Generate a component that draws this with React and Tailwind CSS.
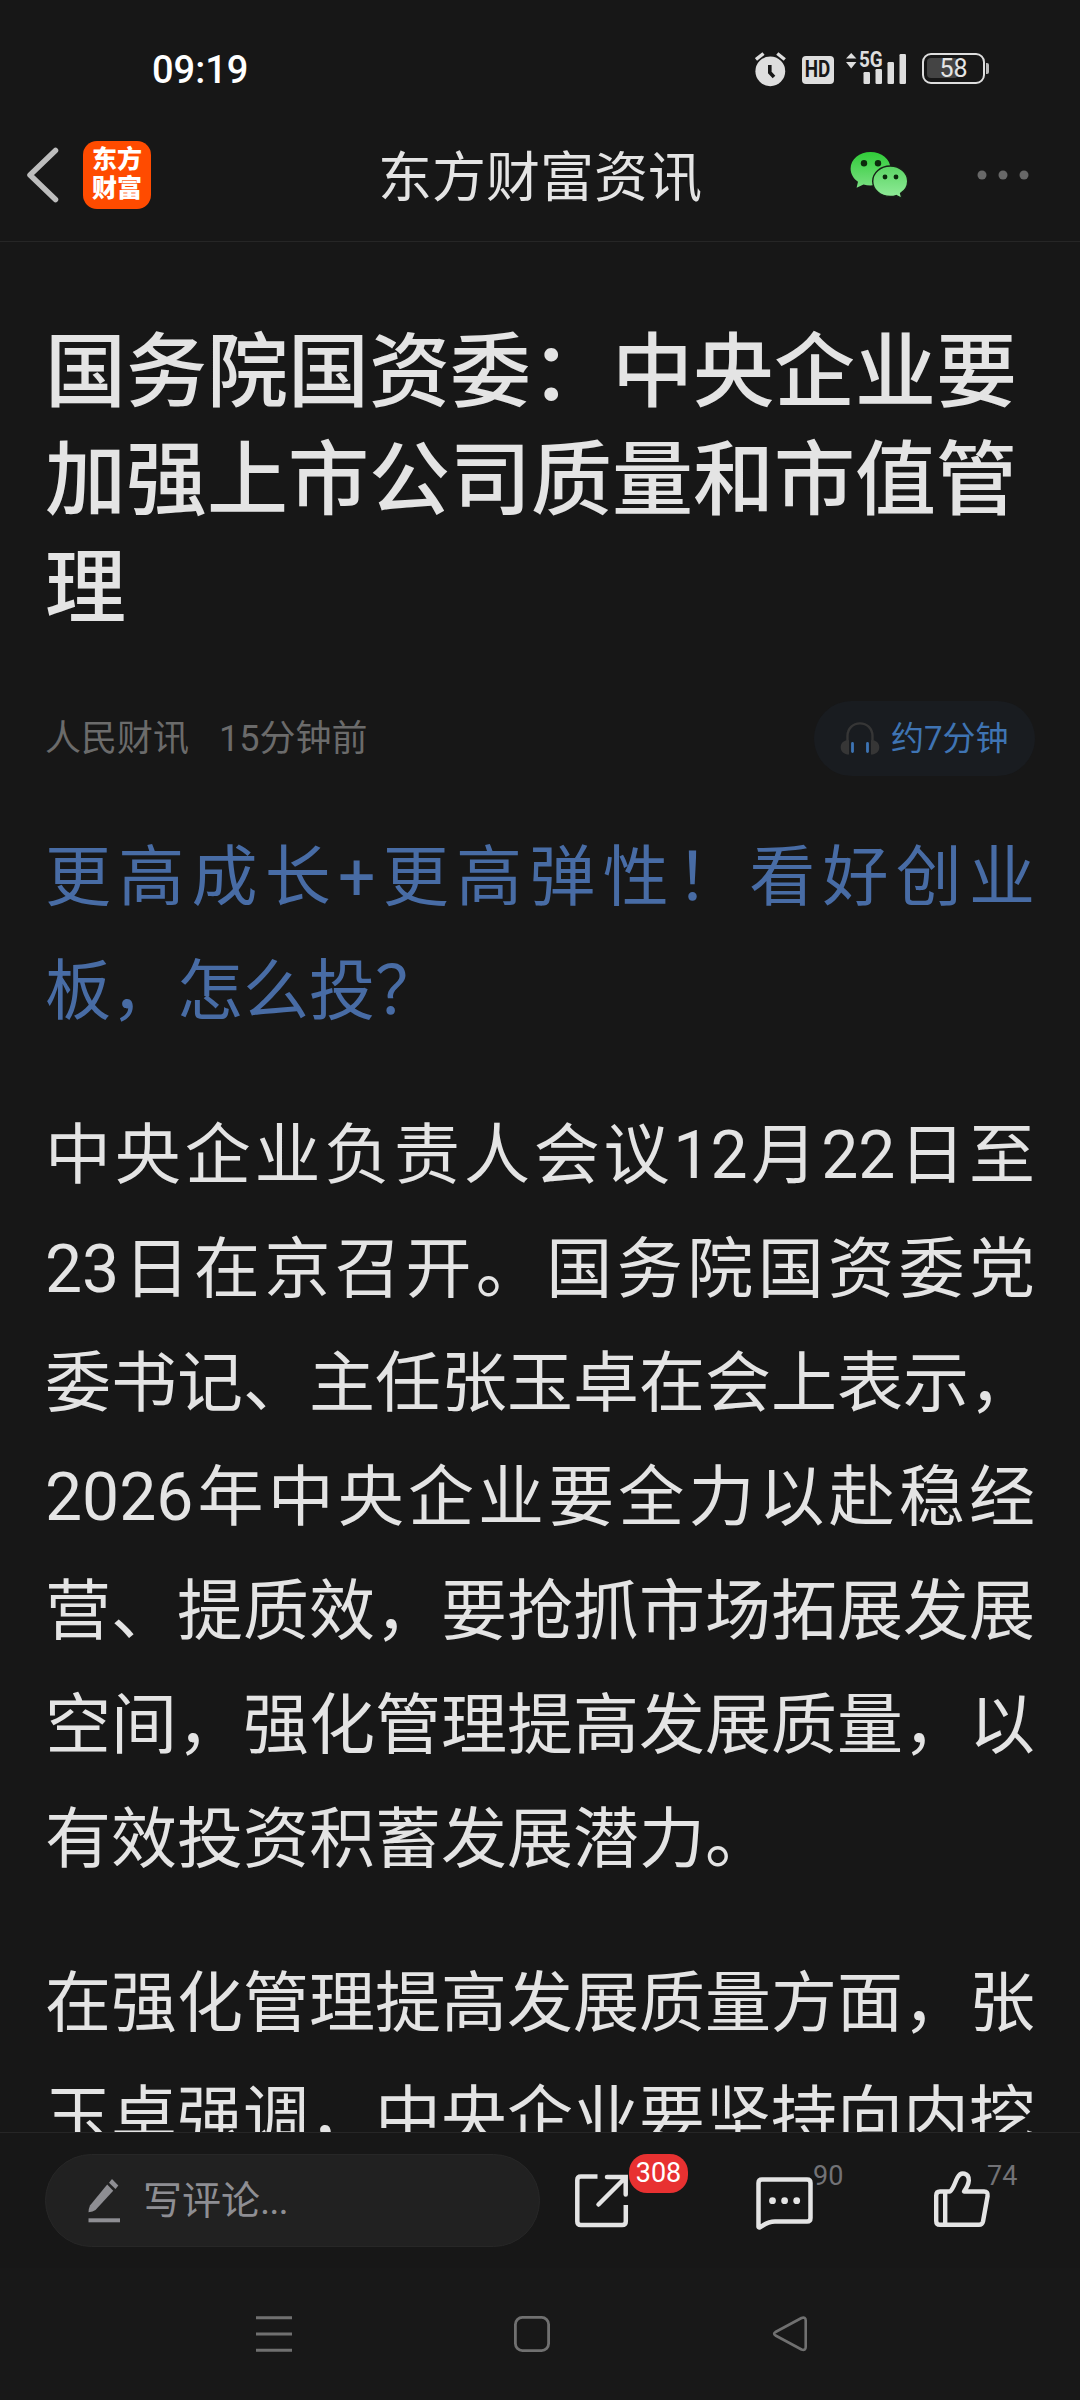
import React from 'react';

const paragraphs = [
  '中央企业负责人会议12月22日至23日在京召开。国务院国资委党委书记、主任张玉卓在会上表示，2026年中央企业要全力以赴稳经营、提质效，要抢抓市场拓展发展空间，强化管理提高发展质量，以有效投资积蓄发展潜力。',
  '在强化管理提高发展质量方面，张玉卓强调，中央企业要坚持向内挖',
];

const AlarmIcon = () => (
  <svg className="mt-[52px] h-[35px] w-[31px]" viewBox="0 0 31 35">
    <circle cx="15.3" cy="19.3" r="14.9" fill="#dedede" />
    <path d="M1 7.5 L8.5 1.5 M29.8 7.5 L22.3 1.5" stroke="#dedede" strokeWidth="3.4" />
    <path d="M14.8 13 V20.5 L19 25" fill="none" stroke="#171717" strokeWidth="3.6" />
  </svg>
);

const SignalIcon = () => (
  <div className="relative mt-[50px] ml-[12px] h-[34px] w-[61px]">
    <svg className="h-[34px] w-[61px]" viewBox="0 0 61 34" fill="#dedede">
      <path d="M5.2 3 L10.4 8.6 H0 Z M5.2 18.4 L0 12 H10.4 Z" />
      <rect x="17.5" y="22" width="6.5" height="12" rx="1.2" />
      <rect x="29.5" y="19" width="6.5" height="15" rx="1.2" />
      <rect x="41.5" y="12" width="6.5" height="22" rx="1.2" />
      <rect x="53.5" y="4" width="6.5" height="30" rx="1.2" />
    </svg>
    <span className="absolute top-0 left-[13px] origin-left scale-x-[0.86] text-[22px] leading-[20px] font-bold text-[#dedede]">5G</span>
  </div>
);

const StatusBar = () => (
  <div className="flex h-[110px] shrink-0 items-start">
    <span className="mt-[48px] ml-[152px] text-[38px] leading-[44px] font-medium text-white">09:19</span>
    <div className="mr-[91px] ml-auto flex items-start">
      <AlarmIcon />
      <div className="mt-[56px] ml-[16px] flex h-[28px] w-[32px] items-center justify-center rounded-[4px] bg-[#dedede]">
        <span className="scale-x-[0.82] text-[23px] leading-[28px] font-bold text-[#171717]">HD</span>
      </div>
      <SignalIcon />
      <div className="mt-[53px] ml-[15px] flex items-center">
        <div className="relative flex h-[31px] w-[63px] items-center justify-center rounded-[9px] border-[2.5px] border-[#dedede]">
          <div className="absolute top-[3px] left-[3px] h-[20px] w-[31px] rounded-[4px] bg-[#444]" />
          <span className="relative text-[25px] leading-[26px] text-[#e4e4e4]">58</span>
        </div>
        <div className="ml-[1px] h-[11px] w-[3px] rounded-r-[2px] bg-[#bbb]" />
      </div>
    </div>
  </div>
);

const WechatIcon = () => (
  <svg className="h-[48px] w-[58px]" viewBox="0 0 58 48">
    <defs>
      <linearGradient id="wx1" x1="0" y1="0" x2="0" y2="1">
        <stop offset="0" stopColor="#30cc38" />
        <stop offset="1" stopColor="#7ae082" />
      </linearGradient>
      <linearGradient id="wx2" x1="0" y1="0" x2="0" y2="1">
        <stop offset="0" stopColor="#5ad463" />
        <stop offset="1" stopColor="#92ec9a" />
      </linearGradient>
    </defs>
    <path d="M20.5 1 C9.5 1 0.6 8.4 0.6 17.6 C0.6 23 3.6 27.8 8 30.8 L6.6 36.7 L13.5 33.4 C15.8 34.1 18 34.4 20.5 34.4 C31.5 34.4 40.5 27 40.5 17.6 C40.5 8.4 31.5 1 20.5 1 Z" fill="url(#wx1)" />
    <path d="M40.3 15 C30.5 15 22.7 21.8 22.7 30.2 C22.7 38.7 30.5 45.5 40.3 45.5 C42.5 45.5 44.3 45.2 46.2 44.6 L51.8 47.3 L50.6 42.3 C55 39.5 57.7 35.2 57.7 30.2 C57.7 21.8 50 15 40.3 15 Z" fill="url(#wx2)" stroke="#171f17" strokeWidth="1.4" />
    <circle cx="14" cy="12.3" r="3.2" fill="#0c2a0c" />
    <circle cx="28" cy="12.3" r="3.2" fill="#0c2a0c" />
    <circle cx="35" cy="26" r="2.4" fill="#0c2a0c" />
    <circle cx="46" cy="26" r="2.4" fill="#0c2a0c" />
  </svg>
);

const Header = () => (
  <header className="relative flex h-[132px] shrink-0 items-center border-b border-[#262626] pb-[2px]">
    <svg className="ml-[26px] h-[56px] w-[34px]" viewBox="0 0 34 56" fill="none" stroke="#bdbdbd" strokeWidth="5.5" strokeLinecap="round" strokeLinejoin="round">
      <path d="M29.5 3.5 L4 28 L29.5 52.5" />
    </svg>
    <div className="ml-[23px] flex h-[68px] w-[68px] flex-col items-center justify-center rounded-[14px] bg-[#ff4b00] pb-[2px] text-[25px] leading-[29px] font-black text-white">
      <span>东方</span>
      <span>财富</span>
    </div>
    <h1 className="absolute inset-x-0 mt-[9px] text-center text-[54px] leading-[70px] text-[#e4e4e4]">东方财富资讯</h1>
    <div className="mr-[51px] ml-auto flex items-center">
      <WechatIcon />
      <svg className="ml-[69px] h-[12px] w-[52px]" viewBox="0 0 52 12" fill="#686868">
        <circle cx="5" cy="6" r="4.5" />
        <circle cx="26" cy="6" r="4.5" />
        <circle cx="47" cy="6" r="4.5" />
      </svg>
    </div>
  </header>
);

const HeadphonesIcon = () => (
  <svg className="h-[33px] w-[40px]" viewBox="0 0 40 33">
    <path d="M7.5 19 V14 C7.5 6.5 13 1.4 20 1.4 C27 1.4 32.5 6.5 32.5 14 V19" fill="none" stroke="#363636" strokeWidth="2.4" />
    <path d="M9 18 V32.5 C4 32.5 0.7 29.5 0.7 25.2 C0.7 21 4 18 9 18 Z M31 18 V32.5 C36 32.5 39.3 29.5 39.3 25.2 C39.3 21 36 18 31 18 Z" fill="#363636" />
    <path d="M12.5 21.5 V29.5 M27.5 21.5 V29.5" stroke="#3d74b4" strokeWidth="2.8" strokeLinecap="round" />
  </svg>
);

const Article = () => (
  <main className="h-[1890px] shrink-0 overflow-hidden px-[45px]">
    <h2 className="mt-[77px] w-[990px] text-[81px] leading-[108px] font-medium text-[#e4e4e4]">
      国务院国资委：中央企业要加强上市公司质量和市值管理
    </h2>
    <div className="mt-[58px] flex h-[75px] items-center text-[36px] text-[#6b6b6b]">
      <span>人民财讯</span>
      <span className="ml-[30px]">15分钟前</span>
      <div className="ml-auto flex h-[75px] w-[221px] items-center rounded-full bg-[#191c20] pl-[26px]">
        <HeadphonesIcon />
        <span className="ml-[11px] text-[33px] text-[#3f74b3]">约7分钟</span>
      </div>
    </div>
    <div className="mt-[45px] text-justify text-[66px] leading-[114px] text-[#e4e4e4]">
      <p className="text-[#486ca5]">更高成长+更高弹性！看好创业板，怎么投？</p>
      {paragraphs.map((text) => (
        <p key={text} className="mt-[50px]">{text}</p>
      ))}
    </div>
  </main>
);

const CommentBar = () => (
  <div className="flex h-[136px] shrink-0 items-start border-t border-[#262626]">
    <div className="mt-[21px] ml-[45px] flex h-[93px] w-[495px] items-center rounded-full border border-[#272727] bg-[#212121]">
      <svg className="ml-[42px] h-[44px] w-[32px]" viewBox="0 0 32 44" fill="#8e8e93">
        <path d="M24 0 L30.3 6.5 L27.5 10 L21 3.7 Z" />
        <path d="M19.2 5.5 L25.2 11.8 L7.5 31 Q5 32.8 0.5 33.2 Q0.6 29.5 2 26.5 Z" />
        <rect x="0.5" y="39.3" width="31.5" height="4" />
      </svg>
      <span className="mt-[2px] ml-[23px] text-[39px] text-[#8e8e93]">
        写评论<span className="tracking-[-1px]">...</span>
      </span>
    </div>
    <div className="relative mt-[40px] ml-[34px]">
      <svg className="h-[56px] w-[56px]" viewBox="0 0 56 56" fill="none" stroke="#e4e4e4" strokeWidth="4.5">
        <path d="M23.5 3.5 H7 Q3.3 3.5 3.3 7 V48.5 Q3.3 52 7 52 H48 Q51.8 52 51.8 48.5 V32" />
        <path d="M33 4 H51.7 V21.5 M51 5 L24.5 31.5" strokeLinecap="round" />
      </svg>
      <span className="absolute -top-[19px] left-[55px] flex h-[39px] w-[59px] items-center justify-center rounded-[18px] bg-[#e83131] text-[27px] text-white">308</span>
    </div>
    <div className="relative mt-[43px] ml-[125px]">
      <svg className="h-[56px] w-[58px]" viewBox="0 0 58 56" fill="none" stroke="#e4e4e4" strokeWidth="4.5" strokeLinejoin="round">
        <path d="M3.5 51 V7 Q3.5 3.5 7 3.5 H52 Q55.5 3.5 55.5 7 V42 Q55.5 45.5 52 45.5 H20 C12 45.5 9 49 4.5 51.6 Z" />
        <g fill="#e4e4e4" stroke="none">
          <circle cx="17.5" cy="24.7" r="3.4" />
          <circle cx="29.6" cy="24.7" r="3.4" />
          <circle cx="41.7" cy="24.7" r="3.4" />
        </g>
      </svg>
      <span className="absolute -top-[16px] left-[58px] text-[27px] leading-[32px] text-[#727276]">90</span>
    </div>
    <div className="relative mt-[37px] ml-[120px]">
      <svg className="h-[60px] w-[58px]" viewBox="0 0 58 60" fill="none" stroke="#e4e4e4" strokeWidth="4.4" strokeLinejoin="round">
        <path d="M17 21.5 C20.5 19 22 12 24.5 7.5 C28 1 36 3 35.8 10.5 C35.5 15 33.5 18 31 21.5 H51 Q55.3 21.5 54.6 26 L50 51.5 Q49.2 54.8 46 54.8 H7 Q3.2 54.8 3.2 51 V25.5 Q3.2 21.5 7 21.5 Z" />
        <path d="M12.2 21.5 V54.8" />
      </svg>
      <span className="absolute -top-[10px] left-[54px] text-[27px] leading-[32px] text-[#727276]">74</span>
    </div>
  </div>
);

const NavBar = () => (
  <nav className="flex h-[132px] shrink-0 items-start bg-[#181818] pt-[46px]">
    <svg className="ml-[255px] h-[40px] w-[38px]" viewBox="0 0 38 40" stroke="#707070" strokeWidth="3">
      <path d="M1 3.7 H37 M1 20 H37 M1 36.3 H37" />
    </svg>
    <svg className="ml-[220px] h-[40px] w-[38px]" viewBox="0 0 38 40" fill="none" stroke="#707070" strokeWidth="2.8">
      <rect x="2.4" y="3.4" width="33.2" height="33.2" rx="7" />
    </svg>
    <svg className="ml-[221px] h-[40px] w-[38px]" viewBox="0 0 38 40" fill="none" stroke="#707070" strokeWidth="2.6" strokeLinejoin="round">
      <path d="M3.5 18 L29.5 4 Q33.7 2.5 33.7 6.5 V33 Q33.7 37 29.5 35.5 L3.5 21.5 Q0.8 19.8 3.5 18 Z" />
    </svg>
  </nav>
);

export default function App() {
  return (
    <div lang="zh-CN" className="flex h-[2400px] w-[1080px] flex-col overflow-hidden bg-[#171717] font-[Roboto,'Noto_Sans_CJK_SC',sans-serif]">
      <StatusBar />
      <Header />
      <Article />
      <CommentBar />
      <NavBar />
    </div>
  );
}
